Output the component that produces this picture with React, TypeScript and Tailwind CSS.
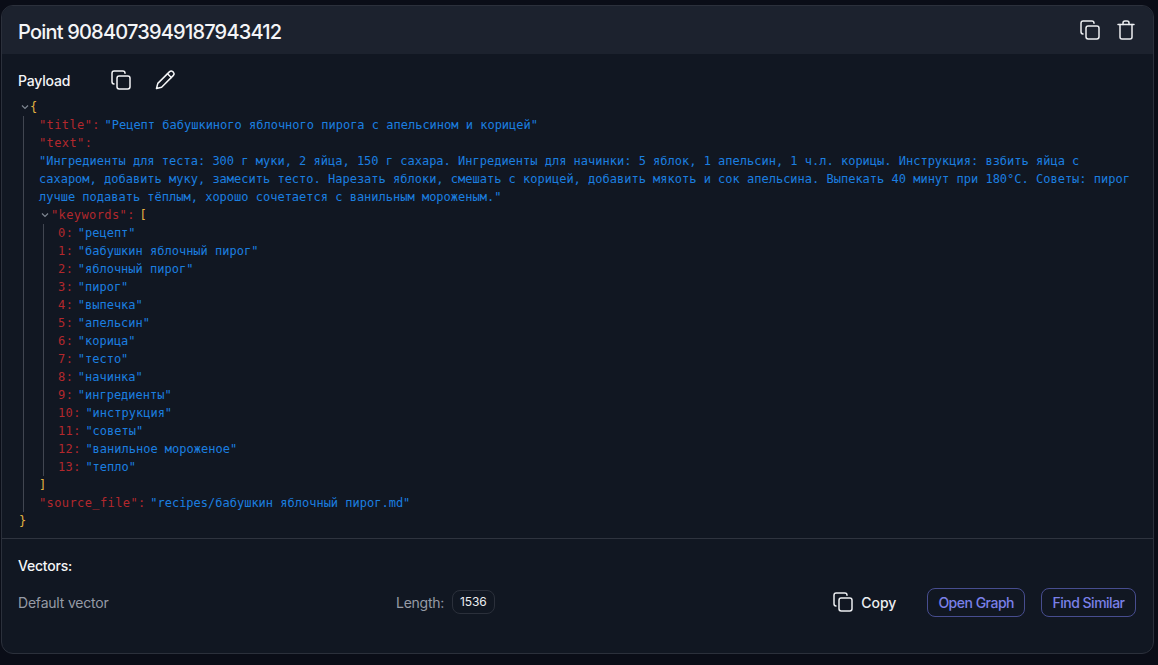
import React from 'react';

const keywords = [
  'рецепт',
  'бабушкин яблочный пирог',
  'яблочный пирог',
  'пирог',
  'выпечка',
  'апельсин',
  'корица',
  'тесто',
  'начинка',
  'ингредиенты',
  'инструкция',
  'советы',
  'ванильное мороженое',
  'тепло',
];

const CopyIcon = ({ size = 24 }: { size?: number }) => (
  <svg width={size} height={size} viewBox="0 0 24 24" fill="none" stroke="currentColor" strokeWidth="1.5" strokeLinecap="round" strokeLinejoin="round">
    <rect x="8" y="8" width="13" height="13" rx="2.2" />
    <path d="M16 5V5.2C16 3.9 15 3 13.8 3H5.2C4 3 3 4 3 5.2V13.8C3 15 3.9 16 5 16" />
  </svg>
);

const TrashIcon = () => (
  <svg width="24" height="24" viewBox="0 0 24 24" fill="none" stroke="currentColor" strokeWidth="1.5" strokeLinecap="round" strokeLinejoin="round">
    <path d="M4 6.5H20" />
    <path d="M6 6.5V19C6 20.2 6.9 21 8 21H16C17.1 21 18 20.2 18 19V6.5" />
    <path d="M9 6.5V5C9 3.9 9.9 3 11 3H13C14.1 3 15 3.9 15 5V6.5" />
  </svg>
);

const PencilIcon = () => (
  <svg width="24" height="24" viewBox="0 0 24 24" fill="none" stroke="currentColor" strokeWidth="1.5" strokeLinecap="round" strokeLinejoin="round">
    <path d="M3.5 20.5L4.8 15.4L16.6 3.6C17.5 2.8 18.8 2.8 19.7 3.6L20.4 4.3C21.2 5.2 21.2 6.5 20.4 7.4L8.6 19.2L3.5 20.5Z" />
    <path d="M14.5 5.7L18.3 9.5" />
  </svg>
);

const Chevron = () => (
  <svg width="8" height="8" viewBox="0 0 8 8" fill="none" stroke="#7d8590" strokeWidth="1.2">
    <path d="M1 2.5L4 5.5L7 2.5" />
  </svg>
);

const Key = ({ children }: { children: React.ReactNode }) => <span className="mr-[4.5px] tracking-[0.4px] text-[#b3282d]">{children}</span>;
const Str = ({ children }: { children: React.ReactNode }) => <span className="text-[#1b7fe0]">{children}</span>;

const App: React.FC = () => {
  return (
    <div className="h-[665px] w-[1158px] overflow-hidden bg-[#0a0d17] pt-[5px] pl-px font-['Inter',sans-serif] text-white">
      <div className="flex h-[649px] w-[1153px] flex-col overflow-hidden rounded-xl border border-[#2b303b] bg-[#111722]">
        {/* Header */}
        <div className="flex h-[48px] shrink-0 items-center justify-between bg-[#1c222e] pr-[15px] pl-[16px]">
          <h1 className="mt-[4px] text-[20px] leading-[26px] font-medium tracking-[-0.8px] text-[#f4f5f7]">Point 9084073949187943412</h1>
          <div className="flex items-center gap-[12px] text-[#eceef1]">
            <CopyIcon />
            <TrashIcon />
          </div>
        </div>

        {/* Payload */}
        <div className="flex h-[44px] shrink-0 items-center pt-[10px] pl-[16px]">
          <span className="mb-[2px] w-[91px] text-[14px] font-medium tracking-[-0.2px] text-[#f4f5f7]">Payload</span>
          <div className="mb-[2px] flex items-center gap-[20px] text-[#f4f5f7]">
            <CopyIcon />
            <PencilIcon />
          </div>
        </div>

        <div className="shrink-0 pr-[18px] pl-[16px] font-['DejaVu_Sans_Mono',monospace] text-[12px] leading-[18px]">
          <div className="flex items-center">
            <span className="ml-[3px] flex w-[8px] justify-center"><Chevron /></span>
            <span className="ml-px text-[#e3b341]">{'{'}</span>
          </div>
          <div className="ml-[5px] border-l border-[#414651] pl-[15px]">
            <div>
              <Key>"title":</Key><Str>"Рецепт бабушкиного яблочного пирога с апельсином и корицей"</Str>
            </div>
            <div><Key>"text":</Key></div>
            <div className="break-words">
              <Str>"Ингредиенты для теста: 300 г муки, 2 яйца, 150 г сахара. Ингредиенты для начинки: 5 яблок, 1 апельсин, 1 ч.л. корицы. Инструкция: взбить яйца с сахаром, добавить муку, замесить тесто. Нарезать яблоки, смешать с корицей, добавить мякоть и сок апельсина. Выпекать 40 минут при 180°C. Советы: пирог лучше подавать тёплым, хорошо сочетается с ванильным мороженым."</Str>
            </div>
            <div className="flex items-center">
              <span className="flex w-[12px] justify-center"><Chevron /></span>
              <Key>"keywords":</Key>
              <span className="text-[#e3b341]">[</span>
            </div>
            <div className="ml-[4px] border-l border-[#414651] pl-[14px]">
              {keywords.map((word, i) => (
                <div key={word}>
                  <Key>{i}:</Key><Str>"{word}"</Str>
                </div>
              ))}
            </div>
            <div className="text-[#e3b341]">]</div>
            <div>
              <Key>"source_file":</Key><Str>"recipes/бабушкин яблочный пирог.md"</Str>
            </div>
          </div>
          <div className="ml-[1px] text-[#e3b341]">{'}'}</div>
        </div>

        {/* Vectors */}
        <div className="mt-[8px] border-t border-[#2f343f] pt-[18px] pr-[17px] pl-[16px]">
          <div className="text-[14px] leading-[18px] font-medium tracking-[-0.2px] text-[#f4f5f7]">Vectors:</div>
          <div className="mt-[12px] flex h-[30px] items-center">
            <span className="w-[378px] text-[14px] tracking-[-0.2px] text-[#969ba6]">Default vector</span>
            <span className="text-[14px] tracking-[-0.25px] text-[#969ba6]">Length:</span>
            <span className="ml-[8px] flex h-[24px] items-center rounded-lg border border-[#2b303b] px-[7px] text-[12px] tracking-[-0.1px] text-[#eceef1]">1536</span>
            <button className="ml-auto flex items-center gap-[6px] text-[14px] font-medium text-[#eceef1]">
              <CopyIcon />
              Copy
            </button>
            <button className="ml-[31px] h-[29px] rounded-lg border border-[#474d8f] px-[10px] text-[14px] font-medium tracking-[-0.5px] text-[#7a80e8]">Open Graph</button>
            <button className="ml-[16px] h-[29px] rounded-lg border border-[#474d8f] px-[10.5px] text-[14px] font-medium tracking-[-0.5px] text-[#7a80e8]">Find Similar</button>
          </div>
        </div>
      </div>
    </div>
  );
};

export default App;
